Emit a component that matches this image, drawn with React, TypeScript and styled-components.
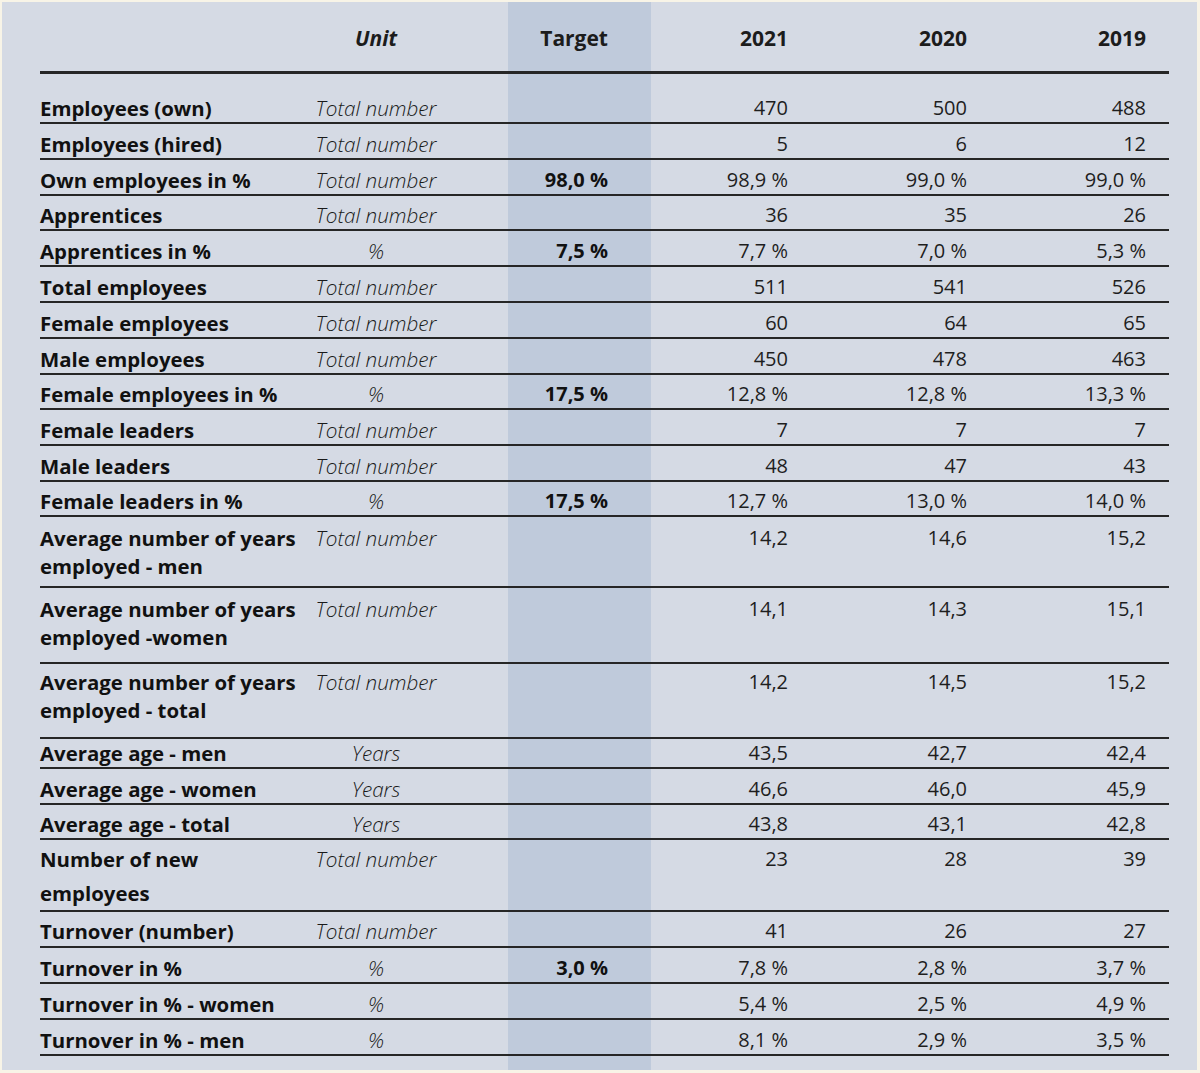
import React from "react";
import styled, { createGlobalStyle } from "styled-components";

const Global = createGlobalStyle`
  html, body { margin: 0; padding: 0; background: #f8f4e7; }
  body { font-family: "Open Sans", "DejaVu Sans", sans-serif; color: #161616; }
`;

const Page = styled.div`
  padding: 2px 3px 3px 2px;
`;

const Panel = styled.div`
  background: #d5dae4;
  padding: 0 28px 0 38px;
`;

const Table = styled.table`
  width: 1129px;
  table-layout: fixed;
  border-collapse: separate;
  border-spacing: 0;
  font-size: 20px;
`;

const Row = styled.tr<{ $pt: number; $pb: number; $lh: number; $line: number }>`
  & > td, & > th {
    padding-top: ${(p) => p.$pt}px;
    padding-bottom: ${(p) => p.$pb}px;
    line-height: ${(p) => p.$lh}px;
    border-bottom: ${(p) => (p.$line ? `${p.$line}px solid #262626` : "none")};
    vertical-align: top;
  }
`;

const Head = styled.th<{ $italic?: boolean; $align?: string; $pr?: number; $band?: boolean }>`
  font-weight: 700;
  font-size: 21px;
  font-style: ${(p) => (p.$italic ? "italic" : "normal")};
  text-align: ${(p) => p.$align || "right"};
  padding-left: 0;
  padding-right: ${(p) => p.$pr || 0}px;
  background: ${(p) => (p.$band ? "#bfcadb" : "transparent")};
  color: #1c1c1c;
  white-space: nowrap;
`;

const Label = styled.td`
  font-weight: 700;
  font-size: 20.4px;
  text-align: left;
  padding-left: 0;
  padding-right: 0;
  white-space: nowrap;
  color: #111;
`;

const Unit = styled.td`
  font-style: italic;
  font-weight: 300;
  font-size: 20.7px;
  text-align: center;
  padding-left: 0;
  padding-right: 58px;
  white-space: nowrap;
  color: #1a1a1a;
`;

const Target = styled.td`
  font-weight: 700;
  text-align: right;
  padding-left: 0;
  padding-right: 43px;
  background: #bfcadb;
  white-space: nowrap;
  color: #111;
`;

const Year = styled.td`
  font-weight: 400;
  text-align: right;
  padding-left: 0;
  padding-right: 23px;
  white-space: nowrap;
  color: #1e1e1e;
`;

const Blank = styled.td``;

type R = {
  label: string[];
  unit: string;
  target?: string;
  v: [string, string, string];
  pt?: number;
  pb?: number;
  lh?: number;
};

const rows: R[] = [
  { label: ["Employees (own)"], unit: "Total number", v: ["470", "500", "488"], pt: 20 },
  { label: ["Employees (hired)"], unit: "Total number", v: ["5", "6", "12"] },
  { label: ["Own employees in %"], unit: "Total number", target: "98,0 %", v: ["98,9 %", "99,0 %", "99,0 %"] },
  { label: ["Apprentices"], unit: "Total number", v: ["36", "35", "26"], pt: 5 },
  { label: ["Apprentices in %"], unit: "%", target: "7,5 %", v: ["7,7 %", "7,0 %", "5,3 %"] },
  { label: ["Total employees"], unit: "Total number", v: ["511", "541", "526"] },
  { label: ["Female employees"], unit: "Total number", v: ["60", "64", "65"] },
  { label: ["Male employees"], unit: "Total number", v: ["450", "478", "463"] },
  { label: ["Female employees in %"], unit: "%", target: "17,5 %", v: ["12,8 %", "12,8 %", "13,3 %"], pt: 5 },
  { label: ["Female leaders"], unit: "Total number", v: ["7", "7", "7"] },
  { label: ["Male leaders"], unit: "Total number", v: ["48", "47", "43"] },
  { label: ["Female leaders in %"], unit: "%", target: "17,5 %", v: ["12,7 %", "13,0 %", "14,0 %"], pt: 5 },
  { label: ["Average number of years", "employed - men"], unit: "Total number", v: ["14,2", "14,6", "15,2"], pt: 7, pb: 6 },
  { label: ["Average number of years", "employed -women"], unit: "Total number", v: ["14,1", "14,3", "15,1"], pt: 7, pb: 11 },
  { label: ["Average number of years", "employed - total"], unit: "Total number", v: ["14,2", "14,5", "15,2"], pt: 4, pb: 13 },
  { label: ["Average age - men"], unit: "Years", v: ["43,5", "42,7", "42,4"], pt: 0 },
  { label: ["Average age - women"], unit: "Years", v: ["46,6", "46,0", "45,9"] },
  { label: ["Average age - total"], unit: "Years", v: ["43,8", "43,1", "42,8"], pt: 5 },
  { label: ["Number of new", "employees"], unit: "Total number", v: ["23", "28", "39"], pt: 2, lh: 34 },
  { label: ["Turnover (number)"], unit: "Total number", v: ["41", "26", "27"], pt: 5, pb: 1 },
  { label: ["Turnover in %"], unit: "%", target: "3,0 %", v: ["7,8 %", "2,8 %", "3,7 %"] },
  { label: ["Turnover in % - women"], unit: "%", v: ["5,4 %", "2,5 %", "4,9 %"] },
  { label: ["Turnover in % - men"], unit: "%", v: ["8,1 %", "2,9 %", "3,5 %"] },
];

export default function App() {
  return (
    <Page>
      <Global />
      <Panel>
        <Table>
          <colgroup>
            <col style={{ width: 262 }} />
            <col style={{ width: 206 }} />
            <col style={{ width: 143 }} />
            <col style={{ width: 160 }} />
            <col style={{ width: 179 }} />
            <col style={{ width: 179 }} />
          </colgroup>
          <thead>
            <Row $pt={22} $pb={19} $lh={28} $line={3}>
              <Head $align="left" />
              <Head $italic $align="center" $pr={58}>Unit</Head>
              <Head $band $pr={43}>Target</Head>
              <Head $pr={23}>2021</Head>
              <Head $pr={23}>2020</Head>
              <Head $pr={23}>2019</Head>
            </Row>
          </thead>
          <tbody>
            {rows.map((r, i) => (
              <Row key={i} $pt={r.pt ?? 6} $pb={r.pb ?? 0} $lh={r.lh ?? 28} $line={2}>
                <Label>
                  {r.label.map((l, j) => (
                    <React.Fragment key={j}>
                      {j > 0 && <br />}
                      {l}
                    </React.Fragment>
                  ))}
                </Label>
                <Unit>{r.unit}</Unit>
                <Target>{r.target ?? ""}</Target>
                <Year>{r.v[0]}</Year>
                <Year>{r.v[1]}</Year>
                <Year>{r.v[2]}</Year>
              </Row>
            ))}
            <Row $pt={14} $pb={0} $lh={0} $line={0}>
              <Blank />
              <Blank />
              <Target />
              <Blank />
              <Blank />
              <Blank />
            </Row>
          </tbody>
        </Table>
      </Panel>
    </Page>
  );
}
